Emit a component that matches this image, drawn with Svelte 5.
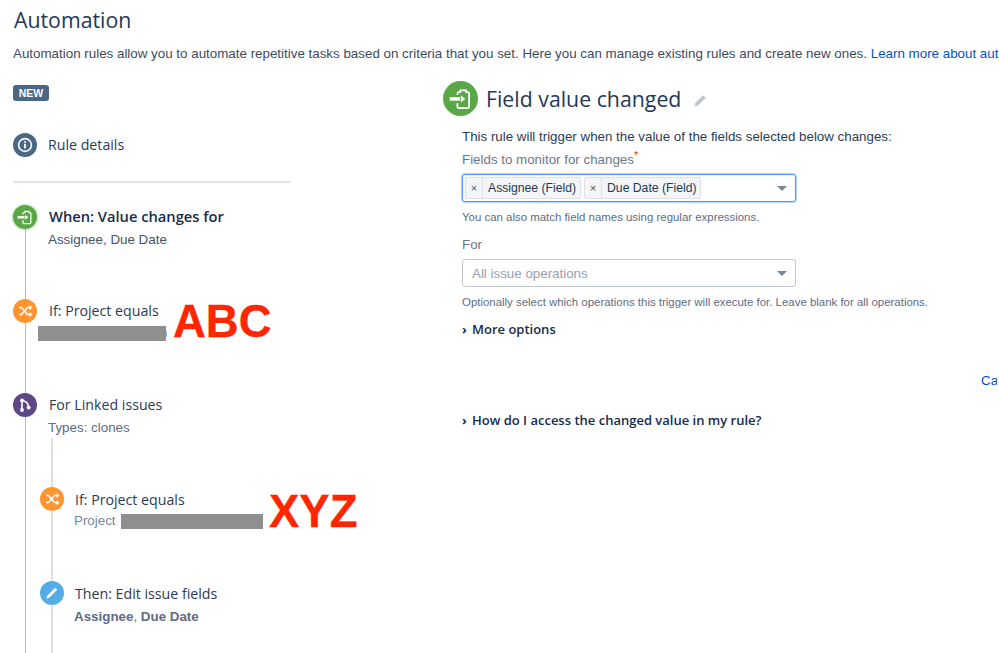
<script>
	let fields = ['Assignee (Field)', 'Due Date (Field)'];
</script>

{#snippet trigger()}
	<path d="M9.9 9.6V8.6a1 1 0 0 1 1-1h1V6.4h4v1.2h1a1 1 0 0 1 1 1v9a1 1 0 0 1-1 1h-6a1 1 0 0 1-1-1v-2.4" fill="none" stroke="#fff" stroke-width="1.2" />
	<rect x="4.6" y="11.1" width="7" height="2.4" fill="#fff" />
	<path d="M12.2 9.8l3 2.5-3 2.5z" fill="#fff" />
{/snippet}

{#snippet shuffle()}
	<g fill="none" stroke="#fff" stroke-width="1.6">
		<path d="M6 8.5h2.5l6 7H17" />
		<path d="M6 15.5h2.5l6-7H17" />
	</g>
	<path d="M16.5 6l3 2.5-3 2.5zM16.5 13l3 2.5-3 2.5z" fill="#fff" />
{/snippet}

{#snippet branch()}
	<g fill="none" stroke="#fff" stroke-width="1.6">
		<path d="M9 7.5v9" />
		<path d="M9 7.5c4 .5 6 2.5 6.5 6" />
	</g>
	<circle cx="9" cy="7.5" r="1.9" fill="#fff" />
	<circle cx="9" cy="17" r="1.9" fill="#fff" />
	<circle cx="15.7" cy="14.5" r="1.9" fill="#fff" />
{/snippet}

{#snippet pencil()}
	<path d="M15.2 6.8l2 2-8 8-2.9.9.9-2.9z" fill="#fff" />
{/snippet}

{#snippet info()}
	<circle cx="12" cy="12" r="6.4" fill="none" stroke="#fff" stroke-width="1.6" />
	<circle cx="12" cy="9" r="1" fill="#fff" />
	<rect x="11.1" y="10.8" width="1.8" height="4.6" fill="#fff" />
{/snippet}

{#snippet dot(color, glyph)}
	<svg class="dot" width="24" height="24" viewBox="0 0 24 24">
		<circle cx="12" cy="12" r="12" fill={color} />
		{@render glyph()}
	</svg>
{/snippet}

<div class="page">
	<h1>Automation</h1>
	<p class="intro">
		Automation rules allow you to automate repetitive tasks based on criteria that you set. Here you can manage existing rules and create new ones. <a href="#top">Learn more about automation</a>
	</p>

	<div class="columns">
		<aside class="rail">
			<span class="lozenge">NEW</span>

			<div class="details">
				{@render dot('#4a6785', info)}
				<span class="title">Rule details</span>
			</div>

			<hr />

			<div class="steps">
				<div class="step first">
					<div class="halo">{@render dot('#5aa845', trigger)}</div>
					<div class="body">
						<div class="title strong">When: Value changes for</div>
						<div class="sub">Assignee, Due Date</div>
					</div>
				</div>

				<div class="step">
					{@render dot('#ff9431', shuffle)}
					<div class="body">
						<div class="title">If: Project equals</div>
						<div class="sub hidden-row out"><span class="redact wide"></span><span class="paren">)</span></div>
					</div>
					<span class="stamp abc">ABC</span>
				</div>

				<div class="step">
					{@render dot('#5e4687', branch)}
					<div class="body">
						<div class="title">For Linked issues</div>
						<div class="sub">Types: clones</div>
					</div>
				</div>

				<div class="nested">
					<div class="step">
						{@render dot('#ff9431', shuffle)}
						<div class="body">
							<div class="title">If: Project equals</div>
							<div class="sub hidden-row">Project <span class="redact narrow"></span></div>
						</div>
						<span class="stamp xyz">XYZ</span>
					</div>

					<div class="step">
						{@render dot('#55ace6', pencil)}
						<div class="body">
							<div class="title">Then: Edit issue fields</div>
							<div class="sub"><b>Assignee</b>, <b>Due Date</b></div>
						</div>
					</div>
				</div>
			</div>
		</aside>

		<main class="panel">
			<header class="panel-head">
				<svg width="35" height="35" viewBox="0 0 24 24">
					<circle cx="12" cy="12" r="12" fill="#5aa845" />
					{@render trigger()}
				</svg>
				<h2>Field value changed</h2>
				<svg class="edit" width="14" height="14" viewBox="0 0 14 14">
					<path d="M10 1.2l2.8 2.8-7.6 7.6L1.4 12.6l1-3.8z" fill="#c1c7d0" />
				</svg>
			</header>

			<div class="form">
				<p class="lead">This rule will trigger when the value of the fields selected below changes:</p>
				<div class="label">Fields to monitor for changes<sup>*</sup></div>
				<div class="select focused">
					{#each fields as field}
						<span class="tag"><span class="remove">×</span><span class="tag-text">{field}</span></span>
					{/each}
					<span class="caret"></span>
				</div>
				<div class="help">You can also match field names using regular expressions.</div>

				<div class="label for">For</div>
				<div class="select">
					<span class="placeholder">All issue operations</span>
					<span class="caret"></span>
				</div>
				<div class="help">Optionally select which operations this trigger will execute for. Leave blank for all operations.</div>

				<div class="toggle more"><span class="chev">›</span>More options</div>

				<div class="actions"><a href="#top">Cancel</a></div>

				<div class="toggle"><span class="chev">›</span>How do I access the changed value in my rule?</div>
			</div>
		</main>
	</div>
</div>

<style>
	:global(body) {
		background: #fff;
		overflow: hidden;
	}

	.page {
		width: 999px;
		height: 653px;
		overflow: hidden;
		box-sizing: border-box;
		padding: 6px 0 0 13px;
		font-family: 'Liberation Sans', Arial, sans-serif;
		color: #172b4d;
	}

	h1 {
		margin: 0 0 0 1px;
		font: 400 21.3px/28px 'Open Sans', sans-serif;
		color: #253858;
	}

	.intro {
		margin: 12px 0 0;
		font-size: 13.37px;
		line-height: 16px;
		white-space: nowrap;
		color: #3d4a5f;
	}

	a {
		color: #0052cc;
		text-decoration: none;
	}

	.columns {
		display: grid;
		grid-template-columns: 430px 1fr;
		margin-top: 13px;
	}

	.rail {
		position: relative;
		width: 277px;
	}

	.lozenge {
		display: block;
		width: 36px;
		height: 16px;
		margin-top: 10px;
		box-sizing: border-box;
		background: #4a6785;
		border-radius: 3px;
		color: #fff;
		font-size: 10.5px;
		font-weight: 700;
		line-height: 16px;
		text-align: center;
	}

	.details {
		display: flex;
		align-items: center;
		gap: 11px;
		margin-top: 32px;
		height: 24px;
	}

	.dot {
		display: block;
		flex: none;
		position: relative;
	}

	.title {
		font: 400 14.2px/20px 'Open Sans', sans-serif;
		color: #2c3b55;
	}

	.title.strong {
		font-size: 14.7px;
		font-weight: 600;
		color: #172b4d;
	}

	hr {
		margin: 24px 0 0;
		border: 0;
		border-top: 2px solid #dfe1e6;
	}

	.steps {
		position: relative;
		margin-top: 22px;
	}

	/* the two timeline rails sit behind the step icons */
	.steps::before {
		content: '';
		position: absolute;
		left: 12px;
		top: 12px;
		height: 600px;
		width: 1px;
		background: #b8bcc2;
	}

	.step {
		position: relative;
		display: flex;
		align-items: flex-start;
		gap: 12px;
		height: 94px;
	}

	.body {
		margin-top: 2px;
	}

	.first .body {
		margin-top: 1px;
	}

	.halo {
		border-radius: 50%;
		box-shadow: 0 0 3px #7fc46a;
		height: 24px;
	}

	.sub {
		margin-top: 5px;
		margin-left: -1px;
		font-size: 13.37px;
		line-height: 16px;
		color: #5e6c84;
		white-space: nowrap;
	}

	.first .sub {
		margin-top: 6px;
		color: #42526e;
	}

	.hidden-row {
		display: flex;
		align-items: center;
		gap: 5px;
		margin-top: 2px;
		height: 18px;
		color: #7a869a;
	}

	.hidden-row.out {
		gap: 0;
		margin-top: 3px;
		margin-left: -11px;
	}

	.redact {
		display: block;
		position: relative;
		z-index: 1;
		height: 15px;
		background: #8f8f8f;
	}

	.paren {
		margin-left: -3px;
	}

	.wide {
		width: 128px;
	}

	.narrow {
		width: 142px;
	}

	.stamp {
		position: absolute;
		font-weight: 700;
		font-size: 45.5px;
		line-height: 46px;
		color: #ff2600;
		-webkit-text-stroke: 0.3px #ff2600;
	}

	.abc {
		left: 160px;
		top: 0;
	}

	.xyz {
		left: 229px;
		top: 2px;
	}

	.nested {
		position: relative;
		margin-left: 27px;
	}

	.nested::before {
		content: '';
		position: absolute;
		left: 11px;
		top: -49px;
		height: 300px;
		width: 2px;
		background: #dfe1e6;
	}

	.nested .step {
		gap: 11px;
	}

	.nested .body {
		margin-top: 3px;
	}

	.nested .sub b {
		color: #5e6c84;
	}

	.panel {
		min-width: 0;
	}

	.panel-head {
		display: flex;
		align-items: center;
		height: 35px;
		margin-top: 6px;
	}

	h2 {
		margin: 0 0 0 8px;
		font: 400 21.3px/30px 'Open Sans', sans-serif;
		color: #253858;
	}

	.edit {
		margin: 5px 0 0 12px;
	}

	.form {
		padding-left: 19px;
	}

	.lead {
		margin: 13px 0 0;
		font-size: 13.33px;
		line-height: 16px;
		color: #2c3b55;
	}

	.label {
		margin-top: 6px;
		font-size: 13.33px;
		line-height: 18px;
		color: #6b778c;
	}

	.label sup {
		color: #de350b;
		font-size: 11px;
		line-height: 0;
	}

	.select {
		display: flex;
		align-items: center;
		gap: 3px;
		position: relative;
		box-sizing: border-box;
		width: 334px;
		height: 28px;
		margin-top: 5px;
		padding: 0 2px;
		border: 1px solid #c1c7d0;
		border-radius: 3px;
	}

	.select.focused {
		border: 1px solid #4c9aff;
		box-shadow: 0 0 0 1px #b3d4ff;
	}

	.tag {
		display: flex;
		height: 20px;
		background: #f4f5f7;
		border: 1px solid #dfe1e6;
		border-radius: 2px;
		font-size: 12.2px;
		line-height: 20px;
		color: #253858;
	}

	.remove {
		width: 16px;
		text-align: center;
		border-right: 1px solid #dfe1e6;
		color: #42526e;
		font-size: 11px;
	}

	.tag-text {
		padding: 0 4px 0 5px;
	}

	.placeholder {
		padding-left: 7px;
		font-size: 13.35px;
		color: #97a0af;
	}

	.caret {
		position: absolute;
		right: 8px;
		top: 11px;
		border: 5.5px solid transparent;
		border-top: 5.5px solid #7a869a;
		border-bottom: 0;
	}

	.help {
		margin-top: 8px;
		font-size: 11.43px;
		line-height: 14px;
		color: #5e6c84;
	}

	.label.for {
		margin-top: 12px;
	}

	.toggle {
		display: flex;
		align-items: baseline;
		font: 600 13px/18px 'Open Sans', sans-serif;
		color: #172b4d;
	}

	.toggle.more {
		margin-top: 11px;
	}

	.chev {
		width: 10px;
		font-weight: 700;
	}

	/* Cancel runs off the visible part of the page, only its start shows */
	.actions {
		margin-top: 35px;
		padding-left: 519px;
		width: 16px;
		height: 16px;
		overflow: hidden;
		font-size: 13.33px;
		line-height: 16px;
		white-space: nowrap;
	}

	.actions + .toggle {
		margin-top: 22px;
	}
</style>
